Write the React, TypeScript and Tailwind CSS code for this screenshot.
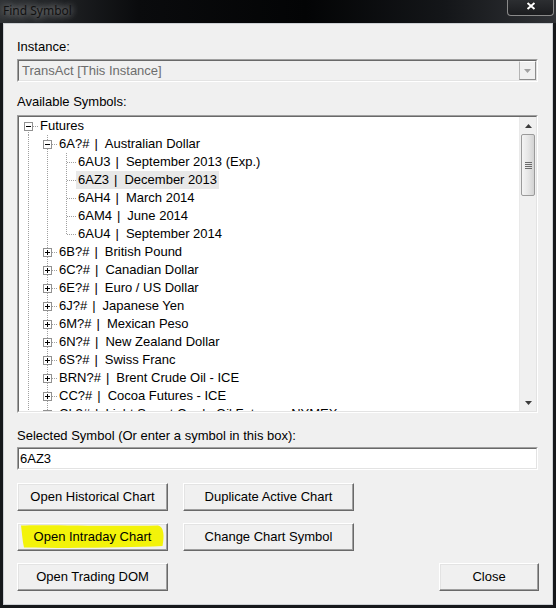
type Conn = "first" | "mid" | "last";

interface TreeRow {
  level: number;
  code: string;
  name?: string;
  conn: Conn;
  box?: "plus" | "minus";
  selected?: boolean;
}

const DOT = "#a0a0a0";

const rows: TreeRow[] = [
  { level: 0, code: "Futures", conn: "first", box: "minus" },
  { level: 1, code: "6A?#", name: "Australian Dollar", conn: "mid", box: "minus" },
  { level: 2, code: "6AU3", name: "September 2013 (Exp.)", conn: "mid" },
  { level: 2, code: "6AZ3", name: "December 2013", conn: "mid", selected: true },
  { level: 2, code: "6AH4", name: "March 2014", conn: "mid" },
  { level: 2, code: "6AM4", name: "June 2014", conn: "mid" },
  { level: 2, code: "6AU4", name: "September 2014", conn: "last" },
  { level: 1, code: "6B?#", name: "British Pound", conn: "mid", box: "plus" },
  { level: 1, code: "6C?#", name: "Canadian Dollar", conn: "mid", box: "plus" },
  { level: 1, code: "6E?#", name: "Euro / US Dollar", conn: "mid", box: "plus" },
  { level: 1, code: "6J?#", name: "Japanese Yen", conn: "mid", box: "plus" },
  { level: 1, code: "6M?#", name: "Mexican Peso", conn: "mid", box: "plus" },
  { level: 1, code: "6N?#", name: "New Zealand Dollar", conn: "mid", box: "plus" },
  { level: 1, code: "6S?#", name: "Swiss Franc", conn: "mid", box: "plus" },
  { level: 1, code: "BRN?#", name: "Brent Crude Oil - ICE", conn: "mid", box: "plus" },
  { level: 1, code: "CC?#", name: "Cocoa Futures - ICE", conn: "mid", box: "plus" },
  { level: 1, code: "CL?#", name: "Light Sweet Crude Oil Futures - NYMEX", conn: "mid", box: "plus" },
];

// vertical dotted rail for an ancestor level that continues below
function Rail() {
  return (
    <svg width="19" height="18" className="shrink-0">
      <line x1="9.5" y1="0" x2="9.5" y2="18" stroke={DOT} strokeDasharray="1 1" />
    </svg>
  );
}

function Connector({ conn, box }: { conn: Conn; box?: "plus" | "minus" }) {
  const y1 = conn === "first" ? 9 : 0;
  const y2 = conn === "last" ? 10 : 18;
  return (
    <svg width="19" height="18" className="shrink-0">
      <line x1="9.5" y1={y1} x2="9.5" y2={y2} stroke={DOT} strokeDasharray="1 1" />
      <line x1={box ? 14 : 10} y1="9.5" x2="19" y2="9.5" stroke={DOT} strokeDasharray="1 1" />
      {box && (
        <g>
          <rect x="5.5" y="5.5" width="8" height="8" fill="#fff" stroke="#919191" />
          <path d="M7 9.5H12" stroke="#000" />
          {box === "plus" && <path d="M9.5 7V12" stroke="#000" />}
        </g>
      )}
    </svg>
  );
}

function Row({ row }: { row: TreeRow }) {
  return (
    <div className="flex h-[18px] items-stretch">
      {Array.from({ length: row.level }).map((_, i) => (
        <Rail key={i} />
      ))}
      <Connector conn={row.conn} box={row.box} />
      <span
        className={`whitespace-pre px-[2px] leading-[18px] ${row.selected ? "bg-[#e8e8e8]" : ""}`}
      >
        {row.code}
        {row.name && (
          <>
            <span className="ml-[5px] mr-[7px]">|</span>
            {row.name}
          </>
        )}
      </span>
    </div>
  );
}

function Sunken({ className, inner, children }: { className: string; inner: string; children?: React.ReactNode }) {
  return (
    <div className={`border border-t-[#a0a0a0] border-l-[#a0a0a0] border-b-white border-r-white ${className}`}>
      <div className={`h-full border border-t-[#696969] border-l-[#696969] border-b-[#e3e3e3] border-r-[#e3e3e3] ${inner}`}>
        {children}
      </div>
    </div>
  );
}

function Button({ w, label, marked }: { w: string; label: string; marked?: boolean }) {
  return (
    <div
      className={`relative flex h-[28px] items-center justify-center border border-t-white border-l-white border-r-[#696969] border-b-[#696969] bg-[#f0f0f0] shadow-[inset_-1px_-1px_0_#a0a0a0,inset_1px_1px_0_#e3e3e3] ${w}`}
    >
      {marked && (
        <svg className="pointer-events-none absolute left-0 top-0" width="151" height="28">
          <path
            d="M3 1.5 C30 0.5 80 2.5 140 1.5 C146 2.5 146.5 12 144.5 22 C110 23.5 60 24.5 6 23.5 C4.5 17 4 9 3 1.5Z"
            fill="#f3f30a"
          />
        </svg>
      )}
      <span className="relative">{label}</span>
    </div>
  );
}

function ScrollBar() {
  return (
    <div className="flex w-[17px] shrink-0 flex-col bg-[#f0f0f0] border-l border-[#e9e9e9]">
      <div className="flex h-[17px] items-center justify-center">
        <svg width="7" height="4">
          <path d="M3.5 0L7 4H0Z" fill="#3c3c3c" />
        </svg>
      </div>
      <div className="mx-[1px] flex h-[62px] flex-col items-center justify-center gap-[1px] rounded-[2px] border border-[#9a9a9a] bg-[linear-gradient(90deg,#f4f4f4,#e6e6e6_50%,#d3d3d3)]">
        <div className="h-[1px] w-[7px] bg-[#6b6b6b]" />
        <div className="h-[1px] w-[7px] bg-[#6b6b6b]" />
        <div className="h-[1px] w-[7px] bg-[#6b6b6b]" />
        <div className="h-[1px] w-[7px] bg-[#6b6b6b]" />
      </div>
      <div className="flex-1" />
      <div className="flex h-[17px] items-center justify-center">
        <svg width="7" height="4">
          <path d="M0 0H7L3.5 4Z" fill="#3c3c3c" />
        </svg>
      </div>
    </div>
  );
}

export default function App() {
  return (
    <div className="flex h-[608px] w-[556px] flex-col bg-[#16181b] font-['Liberation_Sans',Arial,sans-serif] text-[13px] text-black">
      {/* glass title bar */}
      <div className="flex h-[23px] items-start bg-[linear-gradient(90deg,#2f3235_0%,#0a0b0d_25%,#030405_55%,#141619_80%,#303236_100%)]">
        <span className="ml-[3px] mt-[3px] font-['Noto_Sans',sans-serif] text-[12px] leading-[16px] text-[#111] [text-shadow:0_0_7px_rgba(255,255,255,0.6),0_0_12px_rgba(255,255,255,0.4)]">
          Find Symbol
        </span>
        <div className="ml-auto mr-[2px] flex h-[16px] w-[47px] items-start justify-center rounded-b-[4px] border border-t-0 border-[#8a8a8a] bg-[linear-gradient(180deg,#2c2e31,#1b1c1f)] pt-[2px]">
          <svg width="10" height="8">
            <path d="M1 0.5L9 7.5M9 0.5L1 7.5" stroke="#202020" strokeWidth="3.4" />
            <path d="M1.5 1L8.5 7M8.5 1L1.5 7" stroke="#fff" strokeWidth="2" />
          </svg>
        </div>
      </div>

      <div className="mx-[3px] mb-[3px] flex flex-1 flex-col border border-[#cdd0d4] bg-[#f0f0f0] pl-[13px] pr-[14px] pt-[15px]">
        <div className="leading-[15px]">Instance:</div>
        <Sunken className="mt-[5px] h-[23px]" inner="flex items-stretch bg-[#f0f0f0]">
          <span className="flex-1 pl-[3px] leading-[19px] text-[#6d6d6d]">TransAct [This Instance]</span>
          <div className="flex w-[17px] items-center justify-center border border-t-white border-l-[#b4b4b4] border-r-[#8c8c8c] border-b-[#8c8c8c] bg-[#f0f0f0]">
            <svg width="7" height="4">
              <path d="M0 0H7L3.5 4Z" fill="#a0a0a0" />
            </svg>
          </div>
        </Sunken>

        <div className="mt-[12px] leading-[15px]">Available Symbols:</div>
        <Sunken className="mt-[6px] h-[298px]" inner="flex bg-white">
          <div className="flex-1 overflow-hidden">
            {rows.map((r) => (
              <Row key={r.code} row={r} />
            ))}
          </div>
          <ScrollBar />
        </Sunken>

        <div className="mt-[15px] leading-[15px]">Selected Symbol (Or enter a symbol in this box):</div>
        <Sunken className="mt-[4px] h-[23px]" inner="bg-white pl-[1px] leading-[19px]">
          6AZ3
        </Sunken>

        <div className="mt-[13px] flex gap-[15px]">
          <Button w="w-[151px]" label="Open Historical Chart" />
          <Button w="w-[171px]" label="Duplicate Active Chart" />
        </div>
        <div className="mt-[12px] flex gap-[15px]">
          <Button w="w-[151px]" label="Open Intraday Chart" marked />
          <Button w="w-[171px]" label="Change Chart Symbol" />
        </div>
        <div className="mt-[12px] flex">
          <Button w="w-[151px]" label="Open Trading DOM" />
          <div className="ml-auto mr-[-1px]">
            <Button w="w-[100px]" label="Close" />
          </div>
        </div>
      </div>
    </div>
  );
}
